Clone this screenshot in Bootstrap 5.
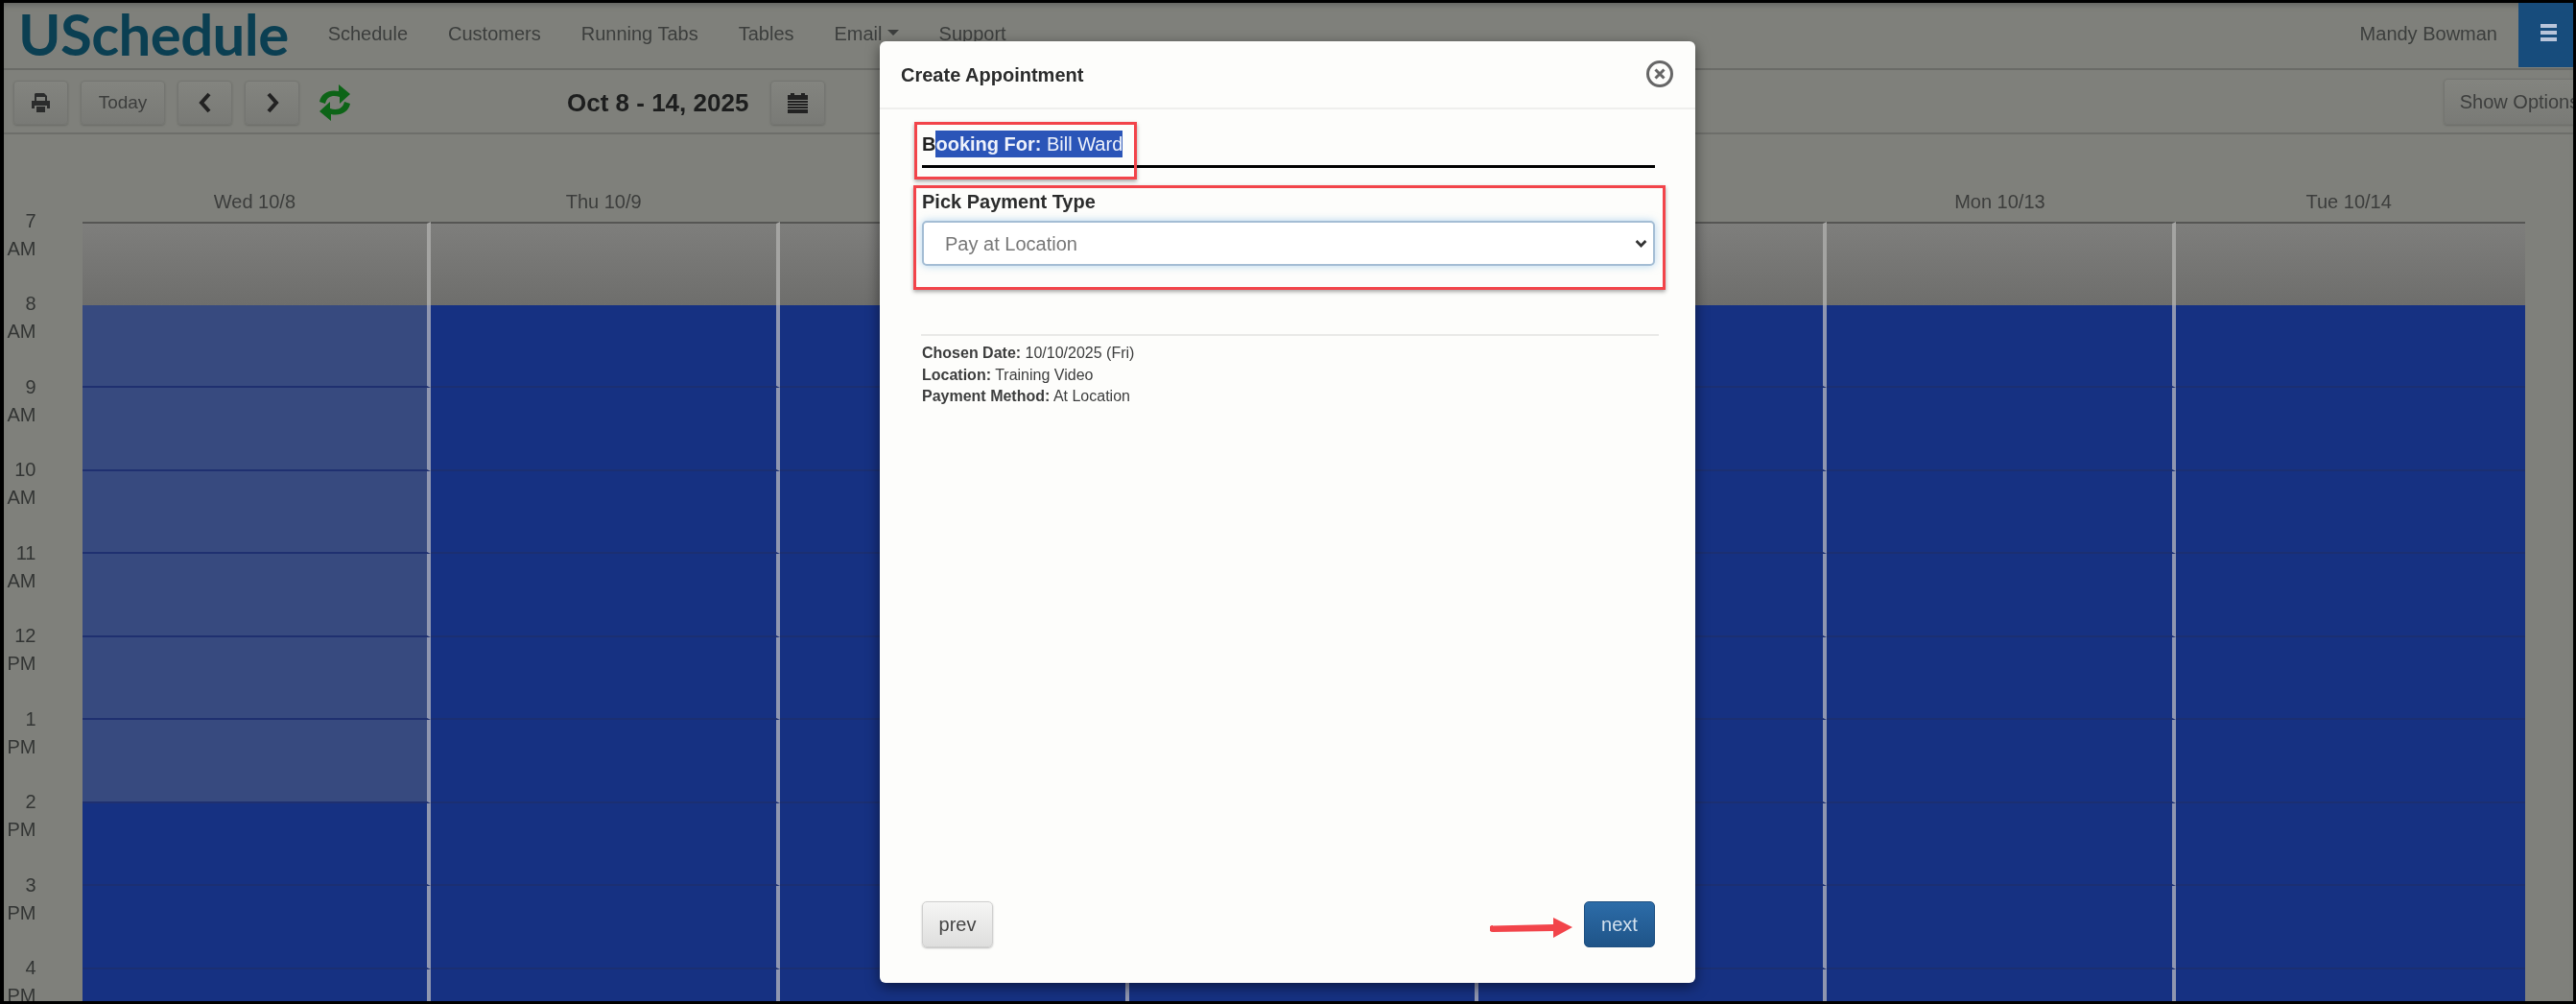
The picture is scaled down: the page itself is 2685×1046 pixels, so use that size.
<!DOCTYPE html>
<html lang="en">
<head>
<meta charset="utf-8">
<title>USchedule</title>
<link href="https://cdn.jsdelivr.net/npm/bootstrap@5.3.0/dist/css/bootstrap.min.css" rel="stylesheet">
<style>
html,body{margin:0;background:#000;overflow:hidden;height:1046px}
body{font-family:"Liberation Sans",Arial,sans-serif;font-size:20px;color:#3c3d3c}
.us-frame{position:relative;width:2678px;height:1040px;margin:3px 3px 3px 4px;background:#7f807b;overflow:hidden;box-shadow:inset 0 6px 6px -4px #5f605d;filter:blur(.5px)}
.us-nav{height:70px;padding:0;border-bottom:2px solid #6a6b67;align-items:flex-start;flex-wrap:nowrap}
.us-brand{padding:0;margin:0 41px 0 15px;font-family:Lato,"Liberation Sans",sans-serif;font-weight:700;font-size:60px;line-height:64px;color:#0b3f52;letter-spacing:-.6px}
.us-brand:hover{color:#0b3f52}
.us-links{gap:42px;padding-top:20px}
.navbar-expand .us-links .nav-link,.us-user{padding:0;color:#3c3e3d;font-size:20px;line-height:24px}
.us-user{margin:20px 22px 0 auto}
.us-menu{width:57px;height:67px;background:#174c7c;display:flex;flex-direction:column;gap:3px;padding:22px 0 0 23px;flex:none}
.us-menu span{display:block;width:17px;height:4px;background:#b9c5da}
.us-tools{height:67px;border-bottom:2px solid #6d6e6a;padding:11px 0 0 10px;gap:13px}
.us-btn{height:46px;font-size:19px;line-height:24px;padding:0;color:#3d3e3d;background:linear-gradient(#83847f,#797a76);border:1px solid #747571;border-radius:4px;box-shadow:0 1px 2px #6a6b67;display:flex;align-items:center;justify-content:center;flex:none}
.us-btn:hover{color:#3d3e3d;background:#7f807b;border-color:#747571}
.us-sq{width:57px}
.us-today{width:88px}
.us-sync{margin:0 0 0 7px;flex:none}
.us-date{font-weight:700;font-size:26px;line-height:46px;color:#1d1e1e;margin-left:212px;margin-right:10px;white-space:nowrap}
.us-opts{margin-left:auto;margin-right:-23px;width:158px;height:48px;font-size:20px;margin-top:-2px}
.us-heads{display:grid;grid-template-columns:81.5px repeat(7,363.8px);height:91px;align-items:end}
.us-heads div{text-align:center;line-height:24px;padding:0 4px 9px 0;color:#3c3d3c;white-space:nowrap}
.us-grid{display:grid;grid-template-columns:81.5px repeat(7,363.8px)}
.us-hours{margin-top:-15.5px;text-align:right;padding-right:48px;color:#333534;line-height:29px}
.us-hours div{height:86.5px}
.us-slot{height:86.5px;border-right:4px solid #8f96b0;background:#163182;border-bottom:2px solid #1b2f72}
.us-slot.gr{background:linear-gradient(#7e7e7c,#6e6e6c);border-top:2px solid #565654;border-right-color:#a4a4a2;border-bottom:0}
.us-slot.lt{background:#374a7f;border-bottom-color:#1f3070}
.us-last .us-slot{border-right:0}
.us-modal{position:absolute;left:913px;top:40px;width:850px;height:981px;background:#fdfdfb;border:0;border-radius:6px;box-shadow:0 4px 14px rgba(0,0,0,.5)}
.us-mhead{height:71px;padding:0 22px;border-bottom:2px solid #efefed;border-radius:0}
.us-mtitle{font-size:20px;font-weight:700;color:#2b2c2c;line-height:24px;margin:0}
.us-x{flex:none;background:none;border:0;padding:0;display:flex;margin-top:-2px}
.us-mbody{padding:0 42px 0 44px;flex:1 1 auto}
.us-for{padding:24px 0 10px;line-height:24px;border-bottom:3px solid #000;color:#222}
.us-hl{background:#2b55b8;color:#eef2fb;padding:2px 0;margin:-2px 0;display:inline-block;line-height:24px}
.us-lab{display:block;font-weight:700;line-height:24px;margin:23px 0 8px;color:#2b2c2c}
.us-sel{height:47px;padding:0 30px 0 22px;font-size:20px;color:#777;border:2px solid #a4bdd4;border-radius:5px;box-shadow:0 0 9px rgba(120,180,230,.55);background-image:url("data:image/svg+xml,%3csvg xmlns='http://www.w3.org/2000/svg' viewBox='0 0 16 12'%3e%3cpath fill='none' stroke='%23333' stroke-width='3.4' d='M2 3l6 6 6-6'/%3e%3c/svg%3e");background-position:right 6px center;background-size:13px 11px}
.us-rule{margin:71px -4px 7px -1px;border:0;border-top:2px solid #e9e9e7;opacity:1}
.us-info{font-size:16px;line-height:22.5px;color:#3c3d3d}
.us-mfoot{padding:0 42px 37px 44px;border:0;justify-content:space-between;flex-wrap:nowrap}
.us-mfoot>*{margin:0}
.us-prev,.us-next{width:74px;height:48px;padding:0;font-size:20px;line-height:24px;border-radius:5px}
.us-prev{color:#444;background:linear-gradient(#f5f5f4,#dededd);border:1px solid #cfcfce;box-shadow:0 1px 2px #bbb}
.us-next{color:#d3e1ee;background:linear-gradient(#2c6ca8,#1f5488);border:1px solid #1e4f80}
.us-red{position:absolute;border:3px solid #f2444a;box-shadow:0 2px 4px rgba(0,0,0,.35);pointer-events:none}
.us-r1{left:36px;top:84px;width:232px;height:60px}
.us-r2{left:35px;top:150px;width:784px;height:109px}
.us-arrow{position:absolute;left:636px;top:912px}
</style>
</head>
<body>
<div class="us-frame">
  <nav class="navbar navbar-expand us-nav">
    <a class="navbar-brand us-brand" href="#">USchedule</a>
    <ul class="navbar-nav us-links">
      <li class="nav-item"><a class="nav-link" href="#">Schedule</a></li>
      <li class="nav-item"><a class="nav-link" href="#">Customers</a></li>
      <li class="nav-item"><a class="nav-link" href="#">Running Tabs</a></li>
      <li class="nav-item"><a class="nav-link" href="#">Tables</a></li>
      <li class="nav-item"><a class="nav-link dropdown-toggle" href="#">Email</a></li>
      <li class="nav-item"><a class="nav-link" href="#">Support</a></li>
    </ul>
    <span class="us-user">Mandy Bowman</span>
    <div class="us-menu"><span></span><span></span><span></span></div>
  </nav>

  <div class="d-flex align-items-start us-tools">
    <button class="btn us-btn us-sq" aria-label="Print"><svg width="21" height="20" viewBox="0 0 21 20"><path fill="#2b2c2c" d="M5 0h9l3 3v5H15V4H6v4H4V1zM1 8h19v8h-3v-3H4v3H1zM6 14h9v6H6z"/></svg></button>
    <button class="btn us-btn us-today">Today</button>
    <button class="btn us-btn us-sq" aria-label="Previous"><svg width="14" height="22" viewBox="0 0 14 22"><path d="M11 2 3 11l8 9" fill="none" stroke="#222" stroke-width="4"/></svg></button>
    <button class="btn us-btn us-sq" aria-label="Next"><svg width="14" height="22" viewBox="0 0 14 22"><path d="m3 2 8 9-8 9" fill="none" stroke="#222" stroke-width="4"/></svg></button>
    <svg class="us-sync" width="34" height="46" viewBox="0 0 34 46"><g fill="#0d6417"><path id="us-a" d="M1 22C3 13 11 9 21 11V4l12 10-11 10v-7c-7-2-13-1-15 7z"/><use href="#us-a" transform="rotate(180 17 23)"/></g></svg>
    <div class="us-date">Oct 8 - 14, 2025</div>
    <button class="btn us-btn us-sq" aria-label="Calendar"><svg width="21" height="21" viewBox="0 0 21 21"><path fill="#222" d="M3 0h4v2h7V0h4v2h3v5H0V2h3zM0 8h21v2H0zM0 11h21v2H0zM0 14h21v2H0zM0 17h21v4H0z"/></svg></button>
    <button class="btn us-btn us-opts">Show Options</button>
  </div>

  <div class="us-heads">
    <div></div><div>Wed 10/8</div><div>Thu 10/9</div><div>Fri 10/10</div><div>Sat 10/11</div><div>Sun 10/12</div><div>Mon 10/13</div><div>Tue 10/14</div>
  </div>
  <div class="us-grid">
    <div class="us-hours">
      <div>7<br>AM</div><div>8<br>AM</div><div>9<br>AM</div><div>10<br>AM</div><div>11<br>AM</div><div>12<br>PM</div><div>1<br>PM</div><div>2<br>PM</div><div>3<br>PM</div><div>4<br>PM</div>
    </div>
    <div><div class="us-slot gr"></div><div class="us-slot lt"></div><div class="us-slot lt"></div><div class="us-slot lt"></div><div class="us-slot lt"></div><div class="us-slot lt"></div><div class="us-slot lt"></div><div class="us-slot"></div><div class="us-slot"></div><div class="us-slot"></div></div>
    <div><div class="us-slot gr"></div><div class="us-slot"></div><div class="us-slot"></div><div class="us-slot"></div><div class="us-slot"></div><div class="us-slot"></div><div class="us-slot"></div><div class="us-slot"></div><div class="us-slot"></div><div class="us-slot"></div></div>
    <div><div class="us-slot gr"></div><div class="us-slot"></div><div class="us-slot"></div><div class="us-slot"></div><div class="us-slot"></div><div class="us-slot"></div><div class="us-slot"></div><div class="us-slot"></div><div class="us-slot"></div><div class="us-slot"></div></div>
    <div><div class="us-slot gr"></div><div class="us-slot"></div><div class="us-slot"></div><div class="us-slot"></div><div class="us-slot"></div><div class="us-slot"></div><div class="us-slot"></div><div class="us-slot"></div><div class="us-slot"></div><div class="us-slot"></div></div>
    <div><div class="us-slot gr"></div><div class="us-slot"></div><div class="us-slot"></div><div class="us-slot"></div><div class="us-slot"></div><div class="us-slot"></div><div class="us-slot"></div><div class="us-slot"></div><div class="us-slot"></div><div class="us-slot"></div></div>
    <div><div class="us-slot gr"></div><div class="us-slot"></div><div class="us-slot"></div><div class="us-slot"></div><div class="us-slot"></div><div class="us-slot"></div><div class="us-slot"></div><div class="us-slot"></div><div class="us-slot"></div><div class="us-slot"></div></div>
    <div class="us-last"><div class="us-slot gr"></div><div class="us-slot"></div><div class="us-slot"></div><div class="us-slot"></div><div class="us-slot"></div><div class="us-slot"></div><div class="us-slot"></div><div class="us-slot"></div><div class="us-slot"></div><div class="us-slot"></div></div>
  </div>

  <div class="modal-content us-modal">
    <div class="modal-header us-mhead d-flex justify-content-between align-items-center">
      <h5 class="us-mtitle">Create Appointment</h5>
      <button class="us-x" aria-label="Close"><svg width="30" height="30" viewBox="0 0 30 30"><circle cx="15" cy="15" r="12.5" fill="none" stroke="#666" stroke-width="3"/><path d="m10.5 10.5 9 9m0-9-9 9" stroke="#666" stroke-width="3"/></svg></button>
    </div>
    <div class="modal-body us-mbody">
      <div class="us-for"><b>B</b><span class="us-hl"><b>ooking For:</b> Bill Ward</span></div>
      <label class="us-lab" for="us-pay">Pick Payment Type</label>
      <select class="form-select us-sel" id="us-pay"><option>Pay at Location</option></select>
      <hr class="us-rule">
      <div class="us-info">
        <div><b>Chosen Date:</b> 10/10/2025 (Fri)</div>
        <div><b>Location:</b> Training Video</div>
        <div><b>Payment Method:</b> At Location</div>
      </div>
    </div>
    <div class="modal-footer us-mfoot">
      <button class="btn us-prev">prev</button>
      <button class="btn us-next">next</button>
    </div>
    <div class="us-red us-r1"></div>
    <div class="us-red us-r2"></div>
    <svg class="us-arrow" width="88" height="24" viewBox="0 0 88 24"><path fill="#f2444a" d="M3 9.5 66 8V1l20 10-20 11v-7l-63 1a3 3 0 0 1 0-7z"/></svg>
  </div>
</div>
<script src="https://cdn.jsdelivr.net/npm/bootstrap@5.3.0/dist/js/bootstrap.bundle.min.js"></script>
</body>
</html>
